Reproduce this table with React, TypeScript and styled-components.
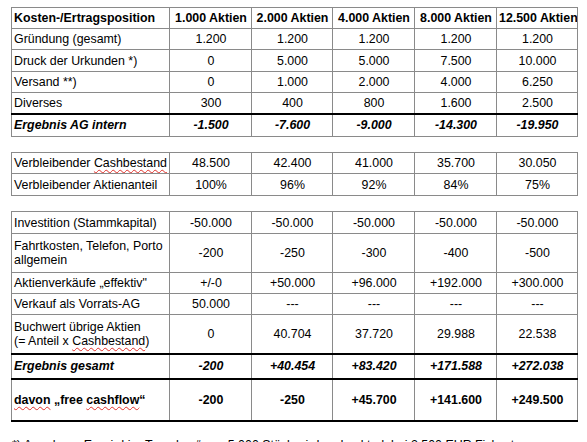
import React from "react"
import styled, { createGlobalStyle } from "styled-components"

const GlobalStyle = createGlobalStyle`
  html, body {
    margin: 0;
    padding: 0;
    background: #ffffff;
  }
  body {
    font-family: "Liberation Sans", Arial, sans-serif;
    font-size: 12.4px;
    color: #000000;
  }
`

const Page = styled.div`
  display: flex;
  flex-direction: column;
  align-items: flex-start;
  gap: 15px;
  padding: 7px 0 0 11px;
  height: 442px;
  overflow: hidden;
  box-sizing: border-box;
`

const Sheet = styled.table`
  border-collapse: collapse;
  table-layout: fixed;
  width: 566px;
`

const Row = styled.tr<{ $h: number; $thick?: boolean; $bold?: boolean; $italic?: boolean }>`
  height: ${(p) => p.$h}px;
  font-weight: ${(p) => (p.$bold ? 700 : 400)};
  font-style: ${(p) => (p.$italic ? "italic" : "normal")};

  & > td {
    border-top: ${(p) => (p.$thick ? "2px solid #000" : "1px solid #8a8a8a")};
  }
`

const Cell = styled.td<{ $center?: boolean }>`
  border: 1px solid #8a8a8a;
  padding: 0 1px 0 2px;
  vertical-align: middle;
  line-height: 14px;
  text-align: ${(p) => (p.$center ? "center" : "left")};
  white-space: nowrap;
  overflow: hidden;
`

const Closing = styled.tr`
  & > td {
    border: 0;
    border-top: 2px solid #000;
    height: 0;
    padding: 0;
  }
`

const Spell = styled.span`
  text-decoration-line: underline;
  text-decoration-style: wavy;
  text-decoration-color: #e0302a;
  text-decoration-thickness: 1px;
  text-underline-offset: 2px;
`

const Note = styled.p`
  margin: 1px 0 0 1px;
  line-height: 14px;
  white-space: nowrap;
`

const widths = [158, 82, 81, 82, 82, 81]

const Cols = () => (
  <colgroup>
    {widths.map((w, i) => (
      <col key={i} style={{ width: w }} />
    ))}
  </colgroup>
)

type Line = {
  label: React.ReactNode
  values: string[]
  h: number
  thick?: boolean
  bold?: boolean
  italic?: boolean
}

const costs: Line[] = [
  { label: "Kosten-/Ertragsposition", values: ["1.000 Aktien", "2.000 Aktien", "4.000 Aktien", "8.000 Aktien", "12.500 Aktien"], h: 21, bold: true },
  { label: "Gründung (gesamt)", values: ["1.200", "1.200", "1.200", "1.200", "1.200"], h: 21 },
  { label: "Druck der Urkunden *)", values: ["0", "5.000", "5.000", "7.500", "10.000"], h: 22 },
  { label: "Versand **)", values: ["0", "1.000", "2.000", "4.000", "6.250"], h: 21 },
  { label: "Diverses", values: ["300", "400", "800", "1.600", "2.500"], h: 21 },
  { label: "Ergebnis AG intern", values: ["-1.500", "-7.600", "-9.000", "-14.300", "-19.950"], h: 23, thick: true, bold: true, italic: true },
]

const remaining: Line[] = [
  { label: <>Verbleibender <Spell>Cashbestand</Spell></>, values: ["48.500", "42.400", "41.000", "35.700", "30.050"], h: 21 },
  { label: "Verbleibender Aktienanteil", values: ["100%", "96%", "92%", "84%", "75%"], h: 22 },
]

const result: Line[] = [
  { label: "Investition (Stammkapital)", values: ["-50.000", "-50.000", "-50.000", "-50.000", "-50.000"], h: 22 },
  { label: <>Fahrtkosten, Telefon, Porto<br />allgemein</>, values: ["-200", "-250", "-300", "-400", "-500"], h: 39 },
  { label: "Aktienverkäufe „effektiv\"", values: ["+/-0", "+50.000", "+96.000", "+192.000", "+300.000"], h: 21 },
  { label: "Verkauf als Vorrats-AG", values: ["50.000", "---", "---", "---", "---"], h: 21 },
  { label: <>Buchwert übrige Aktien<br />(= Anteil x <Spell>Cashbestand</Spell>)</>, values: ["0", "40.704", "37.720", "29.988", "22.538"], h: 39 },
  { label: "Ergebnis gesamt", values: ["-200", "+40.454", "+83.420", "+171.588", "+272.038"], h: 25, thick: true, bold: true, italic: true },
  { label: <><Spell>davon</Spell> „free <Spell>cashflow</Spell>“</>, values: ["-200", "-250", "+45.700", "+141.600", "+249.500"], h: 42, thick: true, bold: true },
]

const Block = ({ lines, closed }: { lines: Line[]; closed?: boolean }) => (
  <Sheet>
    <Cols />
    <tbody>
      {lines.map((l, i) => (
        <Row key={i} $h={l.h} $thick={l.thick} $bold={l.bold} $italic={l.italic}>
          <Cell>{l.label}</Cell>
          {l.values.map((v, j) => (
            <Cell key={j} $center>
              {v}
            </Cell>
          ))}
        </Row>
      ))}
      {closed && (
        <Closing>
          <td colSpan={6} />
        </Closing>
      )}
    </tbody>
  </Sheet>
)

const App = () => (
  <>
    <GlobalStyle />
    <Page>
      <Block lines={costs} />
      <Block lines={remaining} />
      <Block lines={result} closed />
      <Note>*) Annahme: Es wird in „Tranchen“ von 5.000 Stück wird gedruckt, dabei 2.500 EUR Fixkosten</Note>
    </Page>
  </>
)

export default App
